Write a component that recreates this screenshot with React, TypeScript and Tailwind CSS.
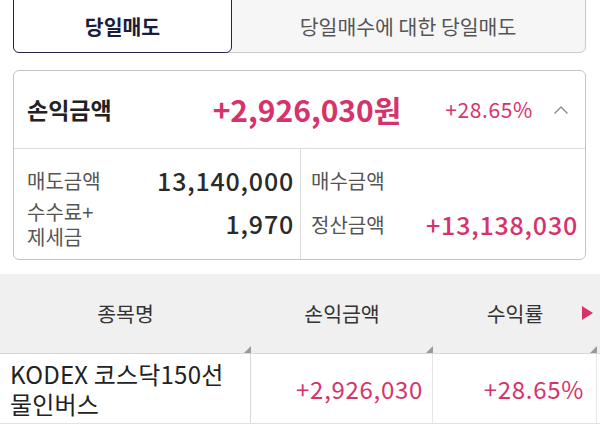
const font = { fontFamily: '"Noto Sans CJK KR", "Noto Sans", sans-serif' };

function Corner() {
  return (
    <span className="absolute right-0 bottom-0 w-0 h-0 border-l-[7px] border-l-transparent border-b-[7px] border-b-[#9a9a9a]" />
  );
}

export default function App() {
  return (
    <div className="w-[600px] h-[437px] overflow-hidden bg-white text-[#222]" style={font}>
      {/* tabs */}
      <div className="mx-[13px] mt-[-10px] h-[63px] flex rounded-md border border-[#c9c9c9] bg-[#f6f6f6] w-[573px]">
        <div className="w-[219px] -m-px flex items-center justify-center pt-[10px] rounded-md border-[1.5px] border-[#23234d] bg-white text-[20.5px] font-bold text-[#1c1c3c]">
          당일매도
        </div>
        <div className="flex-1 flex items-center justify-center pt-[10px] text-[20.5px] text-[#555]">
          당일매수에 대한 당일매도
        </div>
      </div>

      {/* summary card */}
      <div className="mx-[13px] mt-[17px] w-[573px] rounded-md border border-[#c4c4c4]">
        <div className="h-[78px] flex items-center pl-[13px] pr-[16px] border-b border-[#dcdcdc]">
          <span className="text-[23px] font-bold text-[#222]">손익금액</span>
          <span className="ml-auto text-[30px] font-semibold text-[#d6336c]">+2,926,030원</span>
          <span className="ml-[44px] text-[21px] text-[#d6336c] tracking-[0.6px]">+28.65%</span>
          <svg className="ml-[20px]" width="16" height="10" viewBox="0 0 16 10" fill="none">
            <path d="M1.5 8.5 L8 2 L14.5 8.5" stroke="#8a8a8a" strokeWidth="1.4" />
          </svg>
        </div>
        <div className="flex h-[110px]">
          <div className="w-[287px] border-r border-[#dcdcdc] pl-[13px] pr-[6px] pt-[16px] flex flex-col">
            <div className="flex items-center h-[32px]">
              <span className="text-[20px] text-[#555]">매도금액</span>
              <span className="ml-auto text-[25px] font-medium text-[#2a2a2a] tracking-[0.8px]">13,140,000</span>
            </div>
            <div className="flex items-center mt-[2px]">
              <div className="flex flex-col text-[20px] text-[#555] leading-[25px]">
                <span>수수료+</span>
                <span>제세금</span>
              </div>
              <span className="ml-auto text-[25px] font-medium text-[#2a2a2a] tracking-[0.8px]">1,970</span>
            </div>
          </div>
          <div className="flex-1 pl-[10px] pr-[7px] pt-[16px] flex flex-col">
            <div className="flex items-center h-[32px]">
              <span className="text-[20px] text-[#555]">매수금액</span>
            </div>
            <div className="flex items-center h-[52px] mt-[2px]">
              <span className="text-[20px] text-[#555]">정산금액</span>
              <span className="ml-auto text-[25px] font-medium text-[#d6336c] tracking-[0.8px]">+13,138,030</span>
            </div>
          </div>
        </div>
      </div>

      {/* table */}
      <div className="mt-[14px] w-[600px]">
        <div className="flex h-[80px] bg-[#f0f0f0] border-b border-[#d8d8d8]">
          <div className="relative w-[251px] flex items-center justify-center text-[20.5px] text-[#333]">
            종목명
            <Corner />
          </div>
          <div className="relative w-[182px] flex items-center justify-center text-[20.5px] text-[#333]">
            손익금액
            <Corner />
          </div>
          <div className="relative w-[164px] flex items-center justify-center text-[20.5px] text-[#333]">
            수익률
            <Corner />
            <span className="absolute right-[4px] top-[32px] w-0 h-0 border-y-[7px] border-y-transparent border-l-[11px] border-l-[#d6336c]" />
          </div>
        </div>
        <div className="flex h-[70px] border-b border-[#e2e2e2]">
          <div className="w-[251px] border-r border-[#d8d8d8] pl-[10px] flex flex-col justify-center text-[24px] leading-[30px] text-[#222] tracking-[0.2px]">
            <span>KODEX 코스닥150선</span>
            <span>물인버스</span>
          </div>
          <div className="w-[182px] border-r border-[#e6e6e6] pr-[9px] flex items-center justify-end text-[24px] text-[#d6336c] tracking-[0.7px]">
            +2,926,030
          </div>
          <div className="w-[164px] border-r border-[#e6e6e6] pr-[12px] flex items-center justify-end text-[24px] text-[#d6336c] tracking-[0.7px]">
            +28.65%
          </div>
        </div>
      </div>
    </div>
  );
}
